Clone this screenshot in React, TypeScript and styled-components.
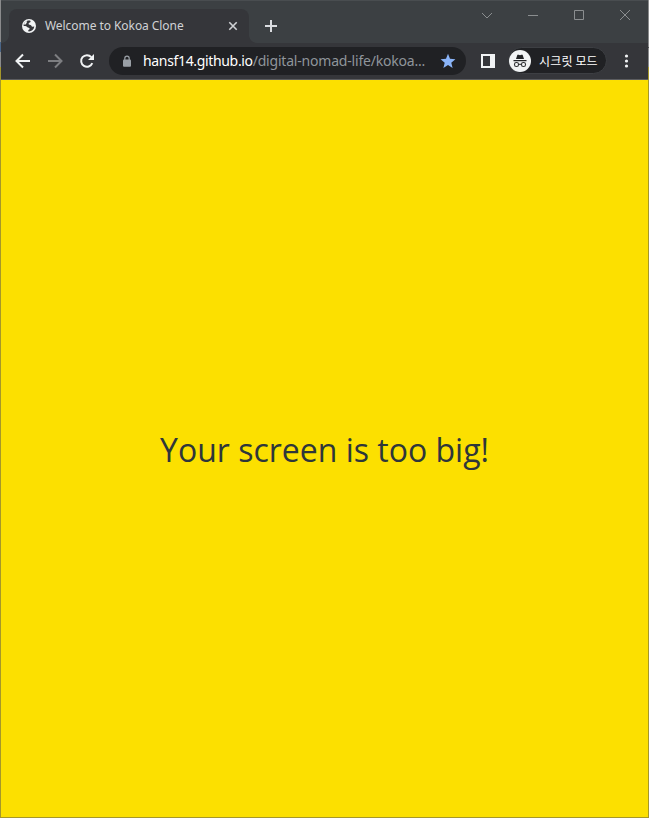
import React from "react";
import styled, { createGlobalStyle } from "styled-components";

const GlobalStyle = createGlobalStyle`
  * { box-sizing: border-box; }
  body { margin: 0; overflow: hidden; background: #fce000; }
  svg { display: block; flex: none; }
`;

const Window = styled.div`
  width: 649px;
  height: 818px;
  padding: 1px;
  display: flex;
  flex-direction: column;
  background:
    linear-gradient(#8a8b8c 0 47px, #4c4d4e 47px 48px, #8a8b8c 48px 67px, #a5972a 67px) right / 1px 100% no-repeat,
    linear-gradient(#8a8b8c 0 42px, #4a6587 42px 52px, #8a8b8c 52px 67px, #a5972a 67px);
  font-family: "Noto Sans", "Noto Sans CJK KR", sans-serif;
`;

const TabStrip = styled.div`
  height: 42px;
  flex: none;
  display: flex;
  align-items: flex-end;
  background: #3c4043;
  box-shadow: 0 -1px #494d50;
`;

const TabFoot = styled.div<{ $side: "left" | "right" }>`
  width: 8px;
  height: 8px;
  background: radial-gradient(circle at ${(p) => (p.$side === "left" ? "0 0" : "100% 0")}, transparent 7.5px, #35363a 8.2px);
`;

const Tab = styled.div`
  width: 240px;
  height: 34px;
  padding: 0 10px 0 13px;
  display: flex;
  align-items: center;
  border-radius: 8px 8px 0 0;
  background: #35363a;
`;

const TabTitle = styled.span`
  flex: 1;
  margin-left: 9px;
  font-size: 12px;
  line-height: 16px;
  letter-spacing: -0.06px;
  white-space: nowrap;
  color: #d0d2d5;
`;

const NewTab = styled.div`
  height: 34px;
  margin-left: 8px;
  display: flex;
  align-items: center;
`;

const Captions = styled.div`
  margin-left: auto;
  margin-right: 17px;
  height: 42px;
  padding-top: 8px;
  display: flex;
  gap: 34px;
`;

const Toolbar = styled.div`
  height: 37px;
  flex: none;
  display: flex;
  align-items: center;
  padding: 0 13px 1px 14px;
  background: #35363a;
  border-bottom: 1px solid #5c5d60;
`;

const NavButtons = styled.div`
  display: flex;
  gap: 16px;
  margin-right: 14px;
`;

const AddressBar = styled.div`
  width: 357px;
  height: 28px;
  padding: 0 10px 0 12px;
  display: flex;
  align-items: center;
  border-radius: 14px;
  background: #202124;
`;

const Url = styled.span`
  flex: 1;
  margin-left: 10px;
  font-size: 14px;
  line-height: 20px;
  letter-spacing: -0.2px;
  white-space: nowrap;
  color: #8f959b;
`;

const Host = styled.span`
  letter-spacing: -0.34px;
  color: #fff;
`;

const SidePanel = styled.div`
  width: 14px;
  height: 14px;
  margin: 0 13px 0 15px;
  border: 2px solid #f1f3f4;
  border-right-width: 5px;
`;

const Profile = styled.div`
  width: 99px;
  height: 27px;
  display: flex;
  align-items: center;
  gap: 8px;
  border: 1px solid #3d3f43;
  border-radius: 14px;
  background: #202124;
`;

const ProfileLabel = styled.span`
  font-family: "Noto Sans CJK KR", sans-serif;
  font-size: 12px;
  line-height: 16px;
  letter-spacing: 0.15px;
  white-space: nowrap;
  color: #fff;
`;

const MenuDots = styled.svg`
  margin-left: auto;
`;

const Page = styled.main`
  flex: 1;
  padding-top: 2px;
  display: flex;
  align-items: center;
  justify-content: center;
  background: #fce000;
`;

const Message = styled.span`
  font-family: "Open Sans", sans-serif;
  font-size: 32px;
  line-height: 44px;
  white-space: nowrap;
  color: #2e363a;
`;

const Globe = () => (
  <svg width="14" height="14" viewBox="0 0 14 14">
    <circle cx="7" cy="7" r="7" fill="#f1f3f4" />
    <path d="M7 1.6C8.2 1.6 8.6 1.8 8.6 2.6 8.6 3.8 6.8 3.6 6.6 4.6 6.5 5.6 7.2 6 8.4 6 9.4 6 9.4 7.6 10.4 7.8L12.3 7.6C12 10.4 9.8 12.4 7 12.4L6.3 12.3V11C7 10.6 7.8 10.2 7.6 9.4 7.4 8.4 6 8.8 5.4 8.2 4.8 7.4 4 7 1.6 7 1.6 4 4 1.6 7 1.6Z" fill="#35363a" />
    <path d="M1.8 5.4C2.8 5.6 3.6 5.8 4 5 4.4 4.2 4.8 4 5.2 2.2L3 2.6Z" fill="#f1f3f4" />
  </svg>
);

const Arrow = ({ forward = false }: { forward?: boolean }) => (
  <svg width="16" height="16" viewBox="0 0 16 16" fill="none" stroke={forward ? "#7d7e81" : "#f1f3f4"} strokeWidth="2">
    <path d={forward ? "M1 8H14M8 1.5 14.5 8 8 14.5" : "M15 8H2M8 1.5 1.5 8 8 14.5"} />
  </svg>
);

const Reload = () => (
  <svg width="16" height="16" viewBox="0 0 16 16" fill="none">
    <path d="M13.3 10.2A5.8 5.8 0 1 1 12.3 4.1" stroke="#f1f3f4" strokeWidth="2" />
    <path d="M15 1V7H9Z" fill="#f1f3f4" />
  </svg>
);

const Incognito = () => (
  <svg width="22" height="22" viewBox="0 0 22 22">
    <circle cx="11" cy="11" r="11" fill="#f1f3f4" />
    <path d="M7 9 8.4 4.8H9.7L11 5.3 12.3 4.8H13.6L15 9ZM4.5 10H17.5V11.2H4.5Z" fill="#202124" />
    <g fill="none" stroke="#303134" strokeWidth="1.1">
      <rect x="5.5" y="12.5" width="4" height="4" rx="1.8" />
      <rect x="12.5" y="12.5" width="4" height="4" rx="1.8" />
      <path d="M9.5 14.3H12.5" />
    </g>
  </svg>
);

export default function App() {
  return (
    <>
      <GlobalStyle />
      <Window>
        <TabStrip>
          <TabFoot $side="left" />
          <Tab>
            <Globe />
            <TabTitle>Welcome to Kokoa Clone</TabTitle>
            <svg width="12" height="12" viewBox="0 0 12 12" stroke="#d0d2d5" strokeWidth="1.6">
              <path d="M2.3 2.3 9.7 9.7M9.7 2.3 2.3 9.7" />
            </svg>
          </Tab>
          <TabFoot $side="right" />
          <NewTab>
            <svg width="12" height="12" viewBox="0 0 12 12" stroke="#dadce0" strokeWidth="2">
              <path d="M0 6H12M6 0V12" />
            </svg>
          </NewTab>
          <Captions>
            {["M1 4 6 9 11 4", "M1 6.5H11", "M1.5 1.5H10.5V10.5H1.5Z", "M1 1 11 11M11 1 1 11"].map((d) => (
              <svg key={d} width="12" height="12" viewBox="0 0 12 12" fill="none" stroke="#8b8e90" strokeWidth="1">
                <path d={d} />
              </svg>
            ))}
          </Captions>
        </TabStrip>
        <Toolbar>
          <NavButtons>
            <Arrow />
            <Arrow forward />
            <Reload />
          </NavButtons>
          <AddressBar>
            <svg width="12" height="12" viewBox="0 0 12 12">
              <path d="M3.8 5V3.4a2.2 2.2 0 0 1 4.4 0V5" fill="none" stroke="#9aa0a6" strokeWidth="1.2" />
              <rect x="2" y="4.5" width="8" height="7.2" rx="1" fill="#9aa0a6" />
            </svg>
            <Url><Host>hansf14.github.io</Host>/digital-nomad-life/kokoa...</Url>
            <svg width="16" height="16" viewBox="0 0 16 16">
              <path d="M8 .8 10 5.8 15.4 6.2 11.3 9.7 12.6 15 8 12.1 3.4 15 4.7 9.7.6 6.2 6 5.8Z" fill="#8ab4f8" />
            </svg>
          </AddressBar>
          <SidePanel />
          <Profile>
            <Incognito />
            <ProfileLabel>시크릿 모드</ProfileLabel>
          </Profile>
          <MenuDots width="16" height="16" viewBox="0 0 16 16" fill="#f1f3f4">
            <circle cx="7.5" cy="3" r="1.6" />
            <circle cx="7.5" cy="8" r="1.6" />
            <circle cx="7.5" cy="13" r="1.6" />
          </MenuDots>
        </Toolbar>
        <Page>
          <Message>Your screen is too big!</Message>
        </Page>
      </Window>
    </>
  );
}
